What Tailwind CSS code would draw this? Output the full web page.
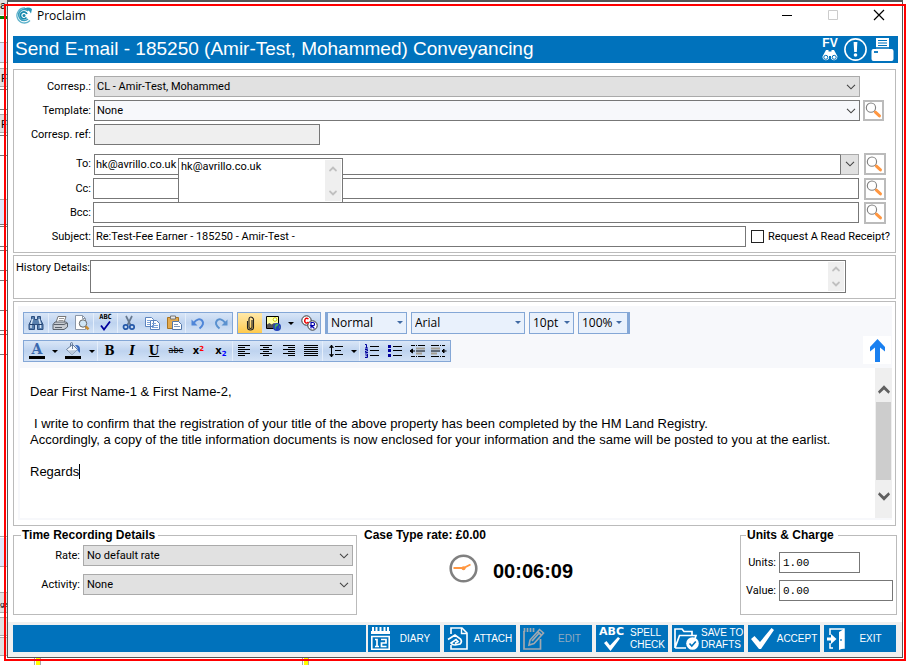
<!DOCTYPE html>
<html lang="en">
<head>
<meta charset="utf-8">
<meta name="viewport" content="width=device-width, initial-scale=1">
<title>Proclaim</title>
<script src="https://cdn.jsdelivr.net/npm/@tailwindcss/browser@4"></script>
</head>
<body class="relative flex min-h-screen flex-col bg-white font-['Roboto',sans-serif] text-[11px] leading-[16px] text-black">

<svg width="0" height="0" class="absolute" aria-hidden="true">
  <defs>
    <symbol id="chev" viewBox="0 0 10 6"><path d="M1 .8 5 4.8 9 .8" fill="none" stroke="#444" stroke-width="1.1"/></symbol>
    <symbol id="up" viewBox="0 0 10 7"><path d="M0 5.2 5 0l5 5.2L8.8 7 5 3.4 1.2 7z" fill="currentColor"/></symbol>
    <symbol id="down" viewBox="0 0 10 7"><path d="M0 1.8 5 7l5-5.2L8.8 0 5 3.6 1.2 0z" fill="currentColor"/></symbol>
    <symbol id="tri" viewBox="0 0 6 3"><path d="M0 0h6L3 3z" fill="currentColor"/></symbol>
    <symbol id="lens" viewBox="0 0 18 18"><circle cx="6.3" cy="6" r="4.9" fill="#fff" stroke="#808080" stroke-width="1.2"/><path d="M9.8 9.6l1.6 1.6" stroke="#999" stroke-width="1"/><path d="M11 10.8l4.3 4" stroke="#ff9640" stroke-width="3.2" stroke-linecap="round"/></symbol>
  </defs>
</svg>

<!-- Edge of the window behind -->
<svg class="absolute left-0 top-0 overflow-visible" width="8" height="665" aria-hidden="true" font-family="Roboto" font-size="11">
  <path d="M0 0h8v15H0zM0 69h8v18H0zM0 115h8v18H0zM0 593h8v20H0zM0 617h8v19H0zM0 637h8v19H0z" fill="#e1e1e1"/>
  <path d="M0 16h8v3H0z" fill="#008000"/>
  <path d="M0 43h8v19H0zM0 200h8v25H0zM0 538h8v28H0z" fill="#dfe7fb"/>
  <path d="M0 42.500h8M0 62.500h8M0 68.500h8M0 86.500h8M0 114.500h8M0 132.500h8M0 199.500h8M0 536.500h8M0 566.500h8M0 592.500h8M0 612.500h8M0 617.500h8M0 635.500h8M0 637.500h8M0 655.500h8" stroke="#aaa"/>
  <path d="M0 89.500h8M0 109.500h8M0 135.500h8M0 155.500h8M0 224.500h8M0 226.500h8M0 246.500h8M0 250.500h8M0 270.500h8M0 280.500h8M0 310.500h8M0 330.500h8M0 334.500h8M0 354.500h8" stroke="#777"/>
  <text x="0" y="9">a</text><text x="1" y="82">F</text><text x="1" y="128">F</text><text x="0" y="607" font-size="8">ge</text>
</svg>
<svg class="absolute bottom-0 left-[34px]" width="276" height="8" aria-hidden="true">
  <path d="M2 0h4v8H2zM270 0h4v8h-4z" fill="#ff0"/><path d="M.5 0v8M6.500 0v8M268.500 0v8M274.500 0v8" stroke="#aaa"/>
</svg>

<main class="relative mx-[7px] mb-[7px] flex flex-1 flex-col border border-t-2 border-[#555] bg-white">
  <!-- Title bar -->
  <div class="flex h-[34px] items-start pl-2 pr-3 pt-[5px]">
    <svg class="mr-1" width="17" height="17" viewBox="0 0 17 17" fill="none" aria-hidden="true">
      <path d="M14 13.500A7.500 7.500 0 1 1 9 1" stroke="#5fb3cc" stroke-width="1.300"/>
      <path d="M12 12A5.500 5.500 0 1 1 12 4" stroke="#3a9fbe" stroke-width="1.600"/>
      <path d="M6 2.500Q12-1 16 2L15 6.500Q12 1.500 6 2.500z" fill="#2a94b6"/>
      <path d="M10.500 10.500A3.400 3.400 0 1 1 11 7" stroke="#178aae" stroke-width="1.700"/>
      <circle cx="8" cy="8.500" r="1.500" fill="#178aae"/>
    </svg>
    <h1 class="flex-1 pt-px font-['Open_Sans',sans-serif] text-[12px] leading-[16px]">Proclaim</h1>
    <div class="flex gap-[26px] pt-[2px]">
      <button aria-label="Minimise" class="h-[12px] w-[22px]"><svg width="12" height="12" class="mx-auto"><path d="M1 6.500h10" stroke="#000"/></svg></button>
      <button aria-label="Maximise" disabled class="h-[12px] w-[18px]"><svg width="12" height="12" class="mx-auto"><path d="M1.500 1.500h9v9h-9z" fill="none" stroke="#ccc"/></svg></button>
      <button aria-label="Close" class="h-[12px] w-[22px]"><svg width="12" height="12" class="mx-auto"><path d="M1 1l10 10M11 1L1 11" stroke="#000" stroke-width="1.200"/></svg></button>
    </div>
  </div>

  <!-- Header -->
  <header class="ml-[5px] mr-1 flex h-[27px] items-center bg-[#0072bc] pl-[2px] pr-1 text-white">
    <h2 class="flex-1 pb-[2px] font-['Liberation_Sans',Arial,sans-serif] text-[19px] leading-[24px]">Send E-mail - 185250 (Amir-Test, Mohammed) Conveyancing</h2>
    <div class="flex items-center gap-1">
      <button aria-label="File view" class="flex w-[20px] flex-col items-center">
        <span class="font-['Liberation_Sans',Arial,sans-serif] text-[12px] font-bold leading-[11px]">FV</span>
        <svg width="16" height="12" viewBox="0 0 16 12"><path d="M4 1h2.500v1.500h3V1H12l3.500 6.500a3.500 3.500 0 0 1-6.500 2V7H7v2.500a3.500 3.500 0 0 1-6.500-2z" fill="#fff"/><circle cx="3.800" cy="8.300" r="2" fill="none" stroke="#0072bc"/><circle cx="12.200" cy="8.300" r="2" fill="none" stroke="#0072bc"/></svg>
      </button>
      <button aria-label="Alerts"><svg width="23" height="23" viewBox="0 0 23 23"><circle cx="11.500" cy="11.500" r="10.600" fill="none" stroke="#fff" stroke-width="1.600"/><path d="M9.600 4h3.800l-.6 10h-2.600z" fill="#fff"/><circle cx="11.500" cy="17" r="1.800" fill="#fff"/></svg></button>
      <button aria-label="Print"><svg width="23" height="23" viewBox="0 0 23 23"><path d="M5 0h13v11H5z" fill="#fff"/><path d="M7 2.500h9M7 5h9M7 7.500h9" stroke="#0072bc" stroke-width="1.200"/><path d="M3 10h17" stroke="#0072bc" stroke-width="1.600"/><path d="M2 11h18.500q2 0 2 2v8q0 2-2 2H2.500q-2 0-2-2v-8q0-2 2-2z" fill="#fff"/><path d="M3 14h4" stroke="#0072bc" stroke-width="1.800"/></svg></button>
    </div>
  </header>

  <form class="flex flex-1 flex-col pl-[5px] pr-[6px] pt-[6px]" onsubmit="return false">
    <!-- Addressing -->
    <section class="relative flex flex-col gap-[3px] border border-[#bbb] pb-[5px] pr-[11px] pt-[6px]">
      <div class="flex h-[21px] items-center gap-[3px]">
        <label for="corresp" class="w-[77px] text-right">Corresp.:</label>
        <div class="relative mr-[24px] h-full flex-1">
          <select id="corresp" class="h-full w-full appearance-none border border-[#aaa] bg-[#e1e1e1] px-[2px]"><option>CL - Amir-Test, Mohammed</option></select>
          <svg class="pointer-events-none absolute right-1 top-2" width="10" height="6"><use href="#chev"/></svg>
        </div>
      </div>
      <div class="flex h-[21px] items-center gap-[3px]">
        <label for="template" class="w-[77px] text-right">Template:</label>
        <div class="relative h-full flex-1">
          <select id="template" class="h-full w-full appearance-none border border-[#777] bg-[#f7f8fb] px-[2px]"><option>None</option></select>
          <svg class="pointer-events-none absolute right-1 top-2" width="10" height="6"><use href="#chev"/></svg>
        </div>
        <button aria-label="Find template" class="h-[21px] w-[21px] border-2 border-[#bbb] bg-white"><svg width="17" height="17"><use href="#lens"/></svg></button>
      </div>
      <div class="flex h-[21px] items-center gap-[3px]">
        <label for="ref" class="w-[77px] text-right">Corresp. ref:</label>
        <input id="ref" disabled class="h-full w-[226px] border border-[#777] bg-[#efefef]">
      </div>
      <div class="mt-[5px] flex h-[22px] items-center gap-[3px]">
        <label for="to" class="w-[77px] text-right">To:</label>
        <div class="flex h-[21px] flex-1">
          <input id="to" value="hk@avrillo.co.uk" class="h-full min-w-0 flex-1 border border-r-0 border-[#777] px-px">
          <button aria-label="Show addresses" class="flex w-[19px] items-center justify-center border border-[#aaa] border-l-[#777] bg-[#e1e1e1]"><svg width="10" height="6"><use href="#chev"/></svg></button>
        </div>
        <button aria-label="Find To" class="ml-[2px] mr-[-2px] h-[22px] w-[22px] shrink-0 border-2 border-[#bbb] bg-white"><svg width="17" height="17"><use href="#lens"/></svg></button>
      </div>
      <div class="flex h-[21px] items-center gap-[2px]">
        <label for="cc" class="w-[77px] text-right">Cc:</label>
        <input id="cc" class="h-full min-w-0 flex-1 border border-[#777] px-[2px]">
        <button aria-label="Find Cc" class="ml-[3px] mr-[-2px] h-[22px] w-[22px] shrink-0 border-2 border-[#bbb] bg-white"><svg width="17" height="17"><use href="#lens"/></svg></button>
      </div>
      <div class="flex h-[21px] items-center gap-[2px]">
        <label for="bcc" class="w-[77px] text-right">Bcc:</label>
        <input id="bcc" class="h-full min-w-0 flex-1 border border-[#777] px-[2px]">
        <button aria-label="Find Bcc" class="ml-[3px] mr-[-2px] h-[22px] w-[22px] shrink-0 border-2 border-[#bbb] bg-white"><svg width="17" height="17"><use href="#lens"/></svg></button>
      </div>
      <div class="flex h-[21px] items-center gap-[2px]">
        <label for="subject" class="w-[77px] text-right">Subject:</label>
        <input id="subject" value="Re:Test-Fee Earner - 185250 - Amir-Test -" class="mr-[3px] h-full min-w-0 flex-1 border border-[#777] px-[2px]">
        <input id="receipt" type="checkbox" class="h-[13px] w-[13px] appearance-none border border-[#222] bg-white">
        <label for="receipt" class="ml-[2px] mr-[-6px] whitespace-nowrap">Request A Read Receipt?</label>
      </div>
      <!-- Address suggestions -->
      <div class="absolute left-[164px] top-[88px] flex h-[44px] w-[165px] border border-b-0 border-[#777] bg-white">
        <ul role="listbox" aria-label="Addresses" class="flex-1 pl-[2px]"><li role="option">hk@avrillo.co.uk</li></ul>
        <div class="mb-px mr-px mt-px flex w-[16px] flex-col items-center justify-between bg-[#efefef] pb-[5px] pt-[6px] text-[#bfbfbf]">
          <svg width="8" height="6"><use href="#up"/></svg><svg width="8" height="6"><use href="#down"/></svg>
        </div>
      </div>
    </section>

    <!-- History -->
    <section class="mt-[2px] flex h-[44px] items-start border border-[#bbb] pr-[49px] pt-1">
      <label for="history" class="w-[76px] whitespace-nowrap text-right">History Details:</label>
      <div class="flex h-[33px] flex-1 border border-[#777]">
        <textarea id="history" class="h-full flex-1 resize-none bg-transparent px-1"></textarea>
        <div class="m-px flex w-[16px] flex-col items-center justify-between bg-[#efefef] py-1 text-[#bfbfbf]">
          <svg width="8" height="6"><use href="#up"/></svg><svg width="8" height="6"><use href="#down"/></svg>
        </div>
      </div>
    </section>

    <!-- Editor -->
    <section class="mt-[2px] flex flex-1 flex-col border border-[#bbb] pb-[5px] pl-1 pr-[3px] pt-1">
      <div class="flex flex-1 flex-col bg-[#f7f8fb] pb-[2px]">
        <div class="flex h-[62px]">
          <div class="flex flex-1 flex-col gap-[6px] pl-[5px] pt-[6px]">
            <div class="flex gap-1">
              <div role="toolbar" aria-label="Standard" class="flex h-[22px] items-center border border-[#84a7d6] bg-linear-to-b from-[#d9e6f7] via-[#bed3ef] to-[#d3e2f6]">
                <button aria-label="Find" class="flex h-full w-[25px] items-center justify-center border-r border-[#e4eefb]"><svg width="16" height="16" viewBox="0 0 16 16"><path d="M3.500 1.500h3v3h3v-3h3v3l2.500 5v5H9.500v-5h-3v5H1v-5l2.500-5z" fill="#587fad" stroke="#2c4f80"/><path d="M4.500 4L3 9.500V13M11 4l1.500 5.500V13" stroke="#d6e5f5" stroke-width="1.500" fill="none"/><path d="M1.500 9.500h5m3 0h5" stroke="#213f6b"/></svg></button>
                <button aria-label="Print letter" class="flex h-full w-[22px] items-center justify-center"><svg width="16" height="16" viewBox="0 0 16 16"><path d="M6 1.500h8l-2 6H4z" fill="#fff" stroke="#777"/><path d="M7 3.500h5M6.500 5.500h5" stroke="#999"/><path d="M3 7h11l1.500 1v4L12 14.500H1V9.500z" fill="#c8ccd2" stroke="#59616b"/><path d="M1.500 9.500H12l3-1.500M3 12.500h7" stroke="#59616b" fill="none"/></svg></button>
                <button aria-label="Preview" class="flex h-full w-[22px] items-center justify-center"><svg width="16" height="16" viewBox="0 0 16 16"><path d="M1.500.500h7l3 3v11h-10z" fill="#fff" stroke="#8b97a8"/><path d="M8.500.500v3h3" fill="none" stroke="#8b97a8"/><circle cx="9" cy="8.500" r="3.700" fill="#cfe5f5" stroke="#666"/><path d="M11.700 11.500l2.800 2.800" stroke="#c98b2e" stroke-width="2.600"/></svg></button>
                <button aria-label="Spelling" class="flex h-full w-[25px] flex-col items-center border-x border-[#e4eefb]"><span class="font-['DejaVu_Sans_Mono',monospace] text-[7px] font-bold leading-[8px]">ABC</span><svg width="11" height="10" viewBox="0 0 11 10"><path d="M1 4.500l3 4L10 .500" fill="none" stroke="#00009c" stroke-width="1.800"/></svg></button>
                <button aria-label="Cut" class="flex h-full w-[22px] items-center justify-center"><svg width="14" height="16" viewBox="0 0 14 16"><path d="M4 1l4.500 9M10 1L5.500 10" stroke="#66788f" stroke-width="1.700"/><circle cx="3.700" cy="12" r="2.200" fill="none" stroke="#2458a8" stroke-width="1.700"/><circle cx="10" cy="12" r="2.200" fill="none" stroke="#2458a8" stroke-width="1.700"/></svg></button>
                <button aria-label="Copy" class="flex h-full w-[23px] items-center justify-center"><svg width="16" height="16" viewBox="0 0 16 16"><path d="M1.500 2.500h6l2 2v7h-8zM6.500 5.500h6l3 3v6h-9z" fill="#fff" stroke="#5b83bd"/><path d="M3 5.500h3M3 7.500h3M3 9.500h3M8 8.500h4M8 10.500h6M8 12.500h6" stroke="#7da3d8"/></svg></button>
                <button aria-label="Paste" class="flex h-full w-[22px] items-center justify-center"><svg width="17" height="16" viewBox="0 0 17 16"><path d="M1.500 2.500h11v11h-11z" fill="#e3aa4e" stroke="#a87322"/><path d="M4.500 1h5v3h-5z" fill="#e8e8e8" stroke="#777"/><path d="M6.500 6.500h6l3 3v5h-9z" fill="#fff" stroke="#5578a8"/><path d="M8 9.500h4M8 11.500h6" stroke="#7d96b8"/></svg></button>
                <button aria-label="Undo" class="flex h-full w-[24px] items-center justify-center border-l border-[#e4eefb]"><svg width="14" height="14" viewBox="0 0 14 14"><path d="M2.500 7Q8 1 11 4.500T8.500 12.500" fill="none" stroke="#4f86d8" stroke-width="2"/><path d="M.5 3.500v6h6z" fill="#4f86d8"/></svg></button>
                <button aria-label="Redo" class="flex h-full w-[23px] items-center justify-center"><svg width="14" height="14" viewBox="0 0 14 14"><path d="M11.500 7Q6 1 3 4.500T5.500 12.500" fill="none" stroke="#5a91cf" stroke-width="2"/><path d="M13.500 3.500v6h-6z" fill="#5a91cf"/></svg></button>
              </div>
              <div role="toolbar" aria-label="Insert" class="flex h-[22px] items-center border border-[#84a7d6] bg-linear-to-b from-[#d9e6f7] via-[#bed3ef] to-[#d3e2f6]">
                <button aria-label="Attach file" class="flex h-full w-[24px] items-center justify-center bg-linear-to-b from-[#ffe9a8] to-[#ffca4a]"><svg width="9" height="15" viewBox="0 0 9 15"><path d="M6 4v7q0 1.500-1.500 1.500T3 11V3q0-2 1.800-2T7.500 3v8.500q0 2.500-3 2.500t-3-2.500V5" fill="none" stroke="#222" stroke-width="1.100"/></svg></button>
                <button aria-label="Insert picture" class="flex h-full w-[22px] items-center justify-center"><svg width="17" height="17" viewBox="0 0 17 17"><path d="M1.500 1.500h12v12h-12z" fill="#ffffa5" stroke="#000"/><circle cx="10" cy="4.500" r="1.800" fill="#fff" stroke="#cc0"/><path d="M2 13V9.500L4.500 8l2 1.500L9 8l4 2v3z" fill="#555"/><circle cx="12" cy="12" r="4" fill="#2340b8"/><path d="M10 10q2-2 3.500-1-.5 2-2 2.500t-.5 3q-2-1-1-4.500M14 11l1.500 1-1 2z" fill="#47a85a"/></svg></button>
                <button aria-label="Picture options" class="flex h-full w-[14px] items-center justify-center"><svg width="6" height="3"><use href="#tri"/></svg></button>
                <button aria-label="Symbols" class="flex h-full w-[22px] items-center justify-center"><svg width="17" height="16" viewBox="0 0 17 16"><circle cx="5.500" cy="5.500" r="4.700" fill="#fff" stroke="#333"/><circle cx="11.500" cy="10.500" r="4.700" fill="#fff" stroke="#333"/><path d="M7.500 4Q5 2.300 4 4.500T5 8q1.500.5 2.500-1" fill="none" stroke="#e00" stroke-width="1.400"/><path d="M10 13.500v-6h2q1.500 0 1.500 1.600T12 10.700h-2l3.500 2.800" fill="none" stroke="#00a" stroke-width="1.200"/></svg></button>
              </div>
              <div class="flex h-[22px] gap-1 border-l-2 border-r-2 border-[#84a7d6] font-['Open_Sans',sans-serif] text-[12px] text-[#416aa3]">
                <div class="relative"><select aria-label="Style" class="h-full w-[80px] appearance-none border border-[#84a7d6] bg-[#e9f1fc] px-[3px] text-black"><option>Normal</option></select><svg class="pointer-events-none absolute right-1 top-[9px]" width="6" height="3"><use href="#tri"/></svg></div>
                <div class="relative"><select aria-label="Font" class="h-full w-[114px] appearance-none border border-[#84a7d6] bg-[#e9f1fc] px-[3px] text-black"><option>Arial</option></select><svg class="pointer-events-none absolute right-1 top-[9px]" width="6" height="3"><use href="#tri"/></svg></div>
                <div class="relative"><select aria-label="Size" class="h-full w-[45px] appearance-none border border-[#84a7d6] bg-[#e9f1fc] px-[3px] text-black"><option>10pt</option></select><svg class="pointer-events-none absolute right-1 top-[9px]" width="6" height="3"><use href="#tri"/></svg></div>
                <div class="relative"><select aria-label="Zoom" class="h-full w-[50px] appearance-none border border-[#84a7d6] bg-[#e9f1fc] px-[3px] text-black"><option>100%</option></select><svg class="pointer-events-none absolute right-[6px] top-[9px]" width="6" height="3"><use href="#tri"/></svg></div>
              </div>
            </div>
            <div class="flex">
              <div role="toolbar" aria-label="Formatting" class="flex h-[22px] items-center border border-[#84a7d6] bg-linear-to-b from-[#d9e6f7] via-[#bed3ef] to-[#d3e2f6] font-['DejaVu_Serif',serif] text-[12px] leading-[16px]">
                <button aria-label="Font colour" class="flex h-full w-[26px] flex-col items-center"><span class="h-[15px] text-[14px] font-bold leading-[16px] text-[#3a68ad]">A</span><span class="h-[3px] w-[16px] bg-black"></span></button>
                <button aria-label="Font colour options" class="flex h-full w-[10px] items-center justify-center"><svg width="6" height="3"><use href="#tri"/></svg></button>
                <button aria-label="Fill colour" class="flex h-full w-[26px] flex-col items-center pt-px"><svg width="16" height="14" viewBox="0 0 16 14"><path d="M1.500 7.500l6-5 5 5-5.500 5z" fill="#f2f7fc" stroke="#667c9b"/><path d="M2.500 8.500l4.500 4 5-4.500z" fill="#b8c8dc"/><path d="M7.500 7V1.500q0-1-1-1T5.500 2v2.500" fill="none" stroke="#667c9b"/><path d="M10 3q5-.5 5 4v4l-2.500-2.500V6z" fill="#3a6cc0"/></svg><span class="h-[3px] w-[16px] bg-black"></span></button>
                <button aria-label="Fill colour options" class="flex h-full w-[12px] items-center justify-center border-r border-[#e4eefb]"><svg width="6" height="3"><use href="#tri"/></svg></button>
                <button aria-label="Bold" class="h-full w-[23px] font-bold">B</button>
                <button aria-label="Italic" class="h-full w-[22px] font-bold italic">I</button>
                <button aria-label="Underline" class="h-full w-[22px] font-bold underline">U</button>
                <button aria-label="Strikethrough" class="h-full w-[22px] font-['DejaVu_Sans',sans-serif] text-[8px] line-through">abe</button>
                <button aria-label="Superscript" class="h-full w-[23px] font-['DejaVu_Sans',sans-serif] text-[10px] font-bold">x<sup class="text-[7px] leading-none text-[#f00]">2</sup></button>
                <button aria-label="Subscript" class="h-full w-[23px] border-r border-[#e4eefb] font-['DejaVu_Sans',sans-serif] text-[10px] font-bold">x<sub class="text-[7px] leading-none text-[#00f]">2</sub></button>
                <button aria-label="Align left" class="flex h-full w-[22px] items-center justify-center"><svg width="12" height="12"><path d="M0 .5h12M0 2.500h7M0 4.500h12M0 6.500h7M0 8.500h12M0 10.500h7" stroke="#000"/></svg></button>
                <button aria-label="Centre" class="flex h-full w-[22px] items-center justify-center"><svg width="12" height="12"><path d="M0 .5h12M3 2.500h6M0 4.500h12M3 6.500h6M0 8.500h12M3 10.500h6" stroke="#000"/></svg></button>
                <button aria-label="Align right" class="flex h-full w-[23px] items-center justify-center"><svg width="12" height="12"><path d="M0 .5h12M5 2.500h7M0 4.500h12M5 6.500h7M0 8.500h12M5 10.500h7" stroke="#000"/></svg></button>
                <button aria-label="Justify" class="flex h-full w-[23px] items-center justify-center border-r border-[#e4eefb]"><svg width="14" height="12"><path d="M0 .5h14M0 2.500h14M0 4.500h14M0 6.500h14M0 8.500h14M0 10.500h14" stroke="#000"/></svg></button>
                <button aria-label="Line spacing" class="flex h-full w-[25px] items-center justify-center"><svg width="14" height="14"><path d="M.5 3.500L2.500 1l2 2.500zM.5 10.500l2 2.500 2-2.500z" stroke="#000" stroke-width=".6"/><path d="M2.500 1v12M6 2.500h8M6 6.500h6M6 10.500h8" stroke="#000"/></svg></button>
                <button aria-label="Line spacing options" class="flex h-full w-[12px] items-center justify-center border-r border-[#e4eefb]"><svg width="6" height="3"><use href="#tri"/></svg></button>
                <button aria-label="Numbered list" class="flex h-full w-[24px] items-center justify-center"><svg width="14" height="14"><path d="M5 2.500h9M5 6.500h9M5 11.500h9" stroke="#000"/><path d="M0 .5h1.500v3.500M0 4h3M0 5.500h2.500v1.500H.5v1.500h2.500M0 10h2.500v3.500H0M.5 11.800h2" fill="none" stroke="#00009c"/></svg></button>
                <button aria-label="Bulleted list" class="flex h-full w-[21px] items-center justify-center"><svg width="14" height="14"><path d="M5 2.500h9M5 6.500h9M5 11.500h9" stroke="#000"/><path d="M0 1h3v3H0zM0 5h3v3H0zM0 10h3v3H0z" fill="#00009c"/></svg></button>
                <button aria-label="Outdent" class="flex h-full w-[23px] items-center justify-center"><svg width="16" height="14"><path d="M2 1.500h14M2 12.500h14" stroke="#000" stroke-dasharray="4 1 1 1 8 0"/><path d="M7 4.500h9M7 9.500h6" stroke="#a39e92" stroke-width="2"/><path d="M7 7h9" stroke="#000"/><path d="M1 7h5M3.500 5L1 7l2.500 2z" fill="#000" stroke="#000"/></svg></button>
                <button aria-label="Indent" class="flex h-full w-[22px] items-center justify-center"><svg width="16" height="14"><path d="M0 1.500h14M0 12.500h14" stroke="#000" stroke-dasharray="8 1 1 1 4 0"/><path d="M0 4.500h9M0 9.500h6" stroke="#a39e92" stroke-width="2"/><path d="M0 7h9" stroke="#000"/><path d="M15.500 7H11M13 5l-2 2 2 2z" fill="#000" stroke="#000"/></svg></button>
              </div>
            </div>
          </div>
          <button aria-label="Expand editor" class="mb-1 mr-px flex h-[28px] w-[28px] items-center justify-center self-end bg-white"><svg width="15" height="23" viewBox="0 0 15 23"><path d="M7.500 0L15 8v4.500L10 8.500V23H5V8.500L0 12.500V8z" fill="#1a80f0"/></svg></button>
        </div>
        <div class="ml-[2px] flex min-h-[149px] flex-1 bg-white">
          <div role="textbox" aria-label="Message" aria-multiline="true" contenteditable="true" class="flex-1 pl-[10px] pt-4 font-['Liberation_Sans',Arial,sans-serif] text-[13px] leading-[16px]">
            <p>Dear First Name-1 &amp; First Name-2,</p>
            <p class="mt-4 pl-1">I write to confirm that the registration of your title of the above property has been completed by the HM Land Registry.</p>
            <p>Accordingly, a copy of the title information documents is now enclosed for your information and the same will be posted to you at the earlist.</p>
            <p class="mt-4"><span class="border-r border-black">Regards</span></p>
          </div>
          <div class="flex w-[17px] flex-col items-center bg-[#efefef] text-[#606060]">
            <svg class="mt-[17px]" width="12" height="9"><use href="#up"/></svg>
            <span class="mt-2 h-[78px] w-[15px] bg-[#cdcdcd]"></span>
            <svg class="mt-3" width="12" height="9"><use href="#down"/></svg>
          </div>
        </div>
      </div>
    </section>

    <!-- Time and charges -->
    <div class="mr-[-1px] mt-px flex h-[88px]">
      <fieldset class="flex w-[344px] flex-col gap-2 border border-[#bbb] pr-[3px]">
        <legend class="ml-[7px] pl-px pr-[3px] font-['Liberation_Sans',Arial,sans-serif] text-[12px] font-bold">Time Recording Details</legend>
        <div class="mt-[2px] flex h-[21px] items-center gap-[3px]">
          <label for="rate" class="w-[66px] text-right">Rate:</label>
          <div class="relative h-full flex-1"><select id="rate" class="h-full w-full appearance-none border border-[#aaa] bg-[#e1e1e1] px-[3px]"><option>No default rate</option></select><svg class="pointer-events-none absolute right-1 top-2" width="10" height="6"><use href="#chev"/></svg></div>
        </div>
        <div class="flex h-[21px] items-center gap-[3px]">
          <label for="activity" class="w-[66px] text-right">Activity:</label>
          <div class="relative h-full flex-1"><select id="activity" class="h-full w-full appearance-none border border-[#aaa] bg-[#e1e1e1] px-[3px]"><option>None</option></select><svg class="pointer-events-none absolute right-1 top-2" width="10" height="6"><use href="#chev"/></svg></div>
        </div>
      </fieldset>
      <div class="flex-1 pl-[7px] font-['Liberation_Sans',Arial,sans-serif] text-[12px] font-bold">
        <p>Case Type rate: £0.00</p>
        <div class="ml-[85px] mt-[11px] flex items-center gap-[15px]">
          <svg width="29" height="29" viewBox="0 0 29 29" aria-hidden="true"><circle cx="14.500" cy="14.500" r="12.800" fill="none" stroke="#808080" stroke-width="2.600"/><path d="M4.500 14h10l7-3.500" fill="none" stroke="#ff9640" stroke-width="1.800"/><circle cx="14.500" cy="14.300" r="2" fill="#ff9640"/></svg>
          <time class="pt-1 text-[20px] leading-[24px]">00:06:09</time>
        </div>
      </div>
      <fieldset class="flex w-[157px] min-w-0 shrink-0 flex-col gap-[7px] border border-[#bbb] pr-[3px]">
        <legend class="ml-[5px] pl-px pr-1 font-['Liberation_Sans',Arial,sans-serif] text-[12px] font-bold">Units &amp; Charge</legend>
        <div class="mt-[9px] flex h-[21px] items-center gap-[3px]">
          <label for="units" class="w-[35px] shrink-0 text-right">Units:</label>
          <input id="units" value="1.00" class="h-full w-[81px] border border-[#777] px-[3px] font-['Liberation_Mono',monospace]">
        </div>
        <div class="flex h-[21px] items-center gap-[3px]">
          <label for="value" class="w-[35px] shrink-0 text-right">Value:</label>
          <input id="value" value="0.00" class="h-full w-full min-w-0 flex-1 border border-[#777] px-[3px] font-['Liberation_Mono',monospace]">
        </div>
      </fieldset>
    </div>
  </form>

  <!-- Actions -->
  <footer class="mt-[7px] flex gap-1 bg-[#f0f0f0] pb-[5px] pl-[5px] pr-[6px] pt-[3px] font-['Liberation_Sans',Arial,sans-serif] text-[10px] leading-[12px] text-white">
    <div class="-mr-[2px] h-[27px] flex-1 bg-[#0072bc]"></div>
    <button class="flex h-[27px] w-[72px] items-center bg-[#0072bc] pl-[3px]">
      <svg width="19" height="23" viewBox="0 0 19 23" aria-hidden="true"><path d="M0 4h19v3H0z" fill="#fff"/><path d="M2 0v5M5.500 0v5M9.500 0v5M13.500 0v5M17 0v5" stroke="#fff" stroke-width="2"/><path d="M.8 9.500h17.400v12.700H.8z" fill="none" stroke="#fff" stroke-width="1.600"/><path d="M4 12.500h2v7M4 19.500h4M10 12.500h5v3.500h-4.500v3.500H15.500" fill="none" stroke="#fff" stroke-width="1.700"/></svg>
      <span class="flex-1 text-center">DIARY</span>
    </button>
    <button class="flex h-[27px] w-[72px] items-center bg-[#0072bc] pl-[3px]">
      <svg width="21" height="23" viewBox="0 0 21 23" aria-hidden="true"><path d="M4 7V1h11l5 5v16H4v-4" fill="none" stroke="#fff" stroke-width="1.600"/><path d="M14.500 1v5.500H20" fill="none" stroke="#fff" stroke-width="1.400"/><path d="M1 12.500L8 8l5.500 4q2 3-.5 5l-5 1q-3 0-4-2l5-3.500 2 2-3 2" fill="none" stroke="#fff" stroke-width="1.700"/></svg>
      <span class="flex-1 pl-[2px] text-center">ATTACH</span>
    </button>
    <button disabled class="flex h-[27px] w-[72px] items-center bg-[#0072bc] pl-[3px] text-[#8fa9bf]">
      <svg width="22" height="23" viewBox="0 0 22 23" aria-hidden="true" stroke="#a0a8b0"><path d="M1 4v18h16.500V12" fill="none" stroke-width="1.700"/><path d="M1.500 1v4M4.500 1v4M7.500 1v4M10.500 1v4" stroke-width="1.700"/><path d="M6 18l1-5L16.500 2.500l4 3.500L11 16.500z" fill="#0072bc" stroke-width="1.600"/><path d="M14.500 4.500l4 3.800M9 14l7-8" stroke-width="1.800"/></svg>
      <span class="flex-1 pl-[2px] text-center">EDIT</span>
    </button>
    <button class="flex h-[27px] w-[72px] items-center bg-[#0072bc] pl-[2px]">
      <span class="flex w-[27px] flex-col items-center"><span class="font-['DejaVu_Sans',sans-serif] text-[11px] font-bold leading-[10px]">ABC</span><svg width="17" height="14" viewBox="0 0 17 14" aria-hidden="true"><path d="M1 6l2.500-2L7 8.500 15 0l2 1.500L7.500 14z" fill="#fff"/></svg></span>
      <span class="ml-[5px] text-left">SPELL<br>CHECK</span>
    </button>
    <button class="flex h-[27px] w-[72px] items-center bg-[#0072bc] pl-[2px]">
      <svg width="25" height="22" viewBox="0 0 25 22" aria-hidden="true"><path d="M1 20V1h7l2 2.500h8V7M1 20L5.500 7.500H22l-1 3M1 20h11" fill="none" stroke="#fff" stroke-width="1.700"/><circle cx="18.500" cy="15.500" r="6.300" fill="#fff"/><path d="M15.500 15.500l2.300 2.500 4-4.500" fill="none" stroke="#0072bc" stroke-width="1.600"/></svg>
      <span class="ml-[2px] whitespace-nowrap text-left">SAVE TO<br>DRAFTS</span>
    </button>
    <button class="flex h-[27px] w-[72px] items-center bg-[#0072bc] pl-[3px]">
      <svg width="23" height="21" viewBox="0 0 23 21" aria-hidden="true"><path d="M0 11l3.500-3L9 14 20.500 0 23 2 10 21H8z" fill="#fff"/></svg>
      <span class="flex-1 text-center">ACCEPT</span>
    </button>
    <button class="flex h-[27px] w-[72px] items-center bg-[#0072bc] pl-[3px]">
      <svg width="18" height="22" viewBox="0 0 18 22" aria-hidden="true"><path d="M3 7V1h14v19H12M3 15v5h3" fill="none" stroke="#fff" stroke-width="1.500"/><path d="M12 4l5-3v19l-5 2z" fill="#fff"/><path d="M0 9.500h4V6l5.500 5L4 16v-3.500H0z" fill="#fff"/><path d="M14 11v2" stroke="#0072bc" stroke-width="1.200"/></svg>
      <span class="flex-1 text-center">EXIT</span>
    </button>
  </footer>
</main>

<!-- Highlight frame -->
<div class="pointer-events-none absolute inset-1 border-2 border-[#f00]" aria-hidden="true"></div>
</body>
</html>
